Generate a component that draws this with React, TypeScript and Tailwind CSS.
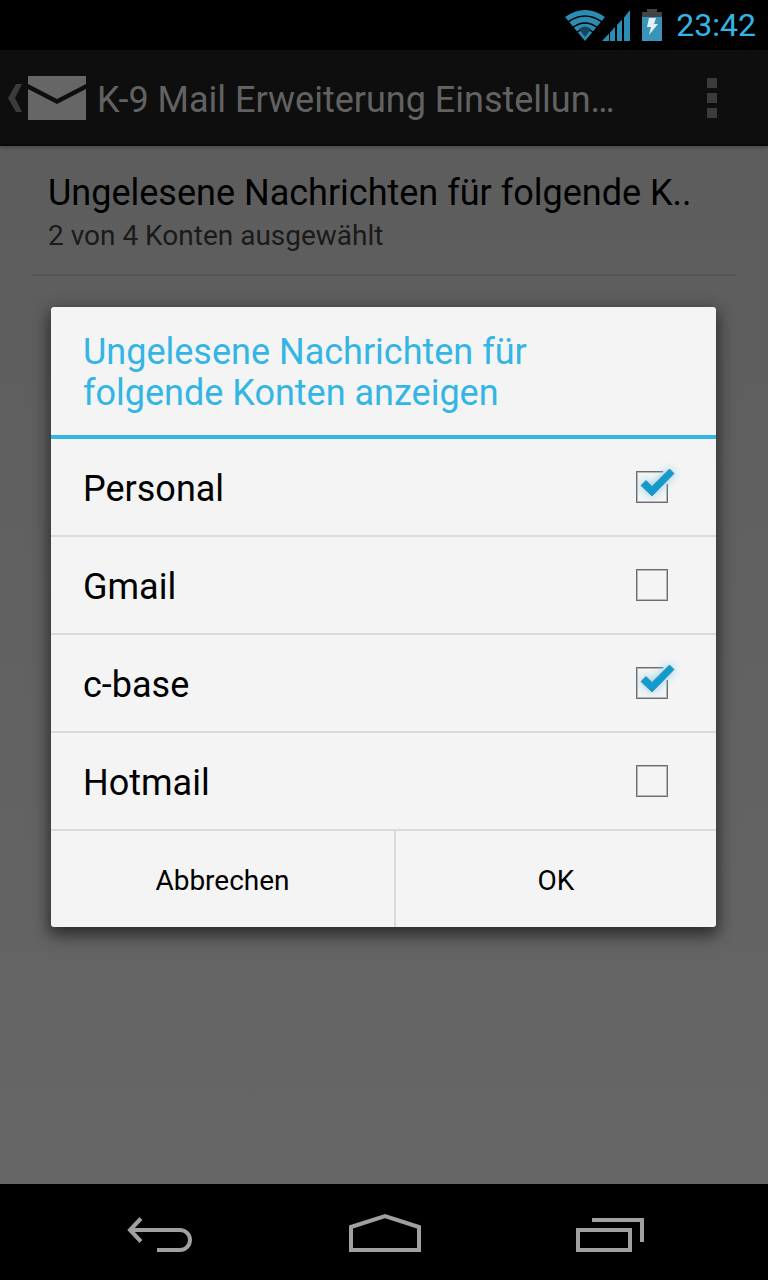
import { useState } from "react";

const initialAccounts = [
  { name: "Personal", selected: true },
  { name: "Gmail", selected: false },
  { name: "c-base", selected: true },
  { name: "Hotmail", selected: false },
];

function StatusBar() {
  return (
    <div className="relative z-10 flex h-[50px] shrink-0 items-center justify-end bg-black pr-3 text-[#33b5e5]">
      <svg width="40" height="32" viewBox="0 0 40 32" aria-hidden="true">
        <path d="M0 8 Q20 -6 40 8 L20 32 Z" fill="#2b8cb4" />
        <g fill="none" stroke="#000" strokeWidth="1.6">
          <path d="M3 13 Q20 1 37 13" />
          <path d="M7 19 Q20 9 33 19" />
          <path d="M11 24 Q20 16 29 24" />
        </g>
        <path d="M14 20 Q20 15 26 20 L20 28 Z" fill="#16465a" />
      </svg>
      <svg className="-ml-[3px]" width="30" height="32" viewBox="0 0 30 32" aria-hidden="true">
        <path
          d="M0 32 L7 24.5 V32Z M8 32 V23.500 L13 18 V32Z M15 32 V16 L20 10.500 V32Z M22 32 V8.500 L28 1 V32Z"
          fill="#2b8cb4"
        />
      </svg>
      <svg className="ml-[10px]" width="20" height="32" viewBox="0 0 20 32" aria-hidden="true">
        <path d="M5 0 H15 V3 H20 V8 H0 V3 H5Z" fill="#444" />
        <path d="M0 8 H20 V32 H0Z" fill="#3a94b8" />
        <path d="M7 9 H14 L12 15 H16 L7 26 L9 18 H5Z" fill="#e4f0f5" />
      </svg>
      <span className="ml-[14px] text-[32px] leading-10">23:42</span>
    </div>
  );
}

function ActionBar() {
  return (
    <header className="flex h-24 shrink-0 items-center border-b-2 border-[#090909] bg-[#0e0e0e] pt-[2px] pr-[51px] pl-2 shadow-[0_1px_4px_#404040]">
      <a href="#back" aria-label="Zurück" className="flex shrink-0 items-center">
        <svg width="14" height="28" viewBox="0 0 14 28" aria-hidden="true">
          <path d="M8 0 H14 L7 14 L14 28 H8 L0 14Z" fill="#3b3b3b" />
        </svg>
        <svg className="ml-[6px]" width="58" height="44" viewBox="0 0 58 44" aria-hidden="true">
          <path d="M0 0 H58 V8 L29 23 L0 8Z M0 13 L29 28 L58 13 V44 H0Z" fill="#666" />
        </svg>
      </a>
      <h1 className="ml-[11px] min-w-0 flex-1 pt-1 text-[36px] leading-[42px] whitespace-nowrap text-[#626262]">
        K-9 Mail Erweiterung Einstellun…
      </h1>
      <button type="button" aria-label="Weitere Optionen" className="flex shrink-0 flex-col gap-[5px]">
        <span className="size-[10px] bg-[#3b3b3b]" />
        <span className="size-[10px] bg-[#3b3b3b]" />
        <span className="size-[10px] bg-[#3b3b3b]" />
      </button>
    </header>
  );
}

function AccountRow({
  name,
  selected,
  onToggle,
}: {
  name: string;
  selected: boolean;
  onToggle: () => void;
}) {
  return (
    <li className="border-b-2 border-[#dadada]">
      <label className="flex h-24 items-center justify-between pr-12 pl-8 text-[36px] leading-[42px] text-black">
        <span className="pt-1">{name}</span>
        <span className="relative size-8">
          <input
            type="checkbox"
            checked={selected}
            onChange={onToggle}
            className="block size-8 appearance-none border border-[#6c6c6c] shadow-[inset_0_0_0_1px_#b8b8b8]"
          />
          {selected && (
            <svg
              className="pointer-events-none absolute -top-2 -left-2 overflow-visible"
              width="48"
              height="44"
              viewBox="0 0 48 44"
              aria-hidden="true"
            >
              <path d="M35 7 H42 V21 H37Z" fill="#f4f4f4" />
              <path
                className="drop-shadow-[0_0_4px_#7fd0f0]"
                d="M13 22.500 L18 17.500 L24 23.500 L41.500 6 L46 10.500 L24 33Z"
                fill="#0d9bd0"
                stroke="#4c8ba6"
                strokeWidth="1"
              />
            </svg>
          )}
        </span>
      </label>
    </li>
  );
}

function AccountDialog() {
  const [accounts, setAccounts] = useState(initialAccounts);
  const toggle = (name: string) =>
    setAccounts(accounts.map((a) => (a.name === name ? { ...a, selected: !a.selected } : a)));

  return (
    <div
      role="dialog"
      aria-labelledby="dialog-title"
      className="w-full overflow-hidden rounded-[3px] bg-[#f4f4f4] shadow-[0_6px_16px_2px_#2a2a2a]"
    >
      <h2
        id="dialog-title"
        className="border-b-4 border-[#33b5e5] px-8 pt-[25px] pb-[21px] text-[36px] leading-[41px] text-[#33b5e5]"
      >
        Ungelesene Nachrichten für
        <br />
        folgende Konten anzeigen
      </h2>
      <ul>
        {accounts.map((a) => (
          <AccountRow key={a.name} name={a.name} selected={a.selected} onToggle={() => toggle(a.name)} />
        ))}
      </ul>
      <div className="grid h-24 grid-cols-[343fr_322fr] text-[28px] leading-8 text-black">
        <button type="button" className="pt-1">
          Abbrechen
        </button>
        <button type="button" className="border-l-2 border-[#dadada] pt-1">
          OK
        </button>
      </div>
    </div>
  );
}

function NavigationBar() {
  return (
    <nav className="flex h-24 shrink-0 items-center justify-between bg-black px-[124px] pt-1">
      <button type="button" aria-label="Zurück">
        <svg width="70" height="44" viewBox="0 0 70 44" fill="none" stroke="#a0a0a0" strokeWidth="4">
          <path d="M5 18 H56 A10 10 0 0 1 56 38 H33" />
          <path d="M17 6.500 L6 18 L17 29.500" />
        </svg>
      </button>
      <button type="button" aria-label="Startseite">
        <svg width="72" height="44" viewBox="0 0 72 44" fill="none" stroke="#a0a0a0" strokeWidth="4">
          <path d="M2 15 L36 4 L70 15 V38 H2Z" />
        </svg>
      </button>
      <button type="button" aria-label="Letzte Apps">
        <svg width="68" height="44" viewBox="0 0 68 44" fill="none" stroke="#a0a0a0" strokeWidth="4">
          <path d="M2 18 H54 V38 H2Z" />
          <path d="M16 8 H66 V30" />
        </svg>
      </button>
    </nav>
  );
}

export default function App() {
  return (
    <div className="flex min-h-screen flex-col bg-black font-['Roboto','Liberation_Sans',sans-serif]">
      <StatusBar />
      <div className="relative flex flex-1 flex-col bg-linear-to-b from-[#5c5c5c] to-[#666]">
        <ActionBar />
        <main className="px-8">
          <section className="border-b-2 border-[#555] px-4 pt-[26px] pb-[21px]">
            <h3 className="text-[36px] leading-[42px] whitespace-nowrap text-black">
              Ungelesene Nachrichten für folgende K..
            </h3>
            <p className="mt-[5px] text-[28px] leading-[34px] text-[#1a1a1a]">2 von 4 Konten ausgewählt</p>
          </section>
        </main>
        <div className="absolute inset-0 flex items-center justify-center pr-[52px] pl-[51px]">
          <AccountDialog />
        </div>
      </div>
      <NavigationBar />
    </div>
  );
}
